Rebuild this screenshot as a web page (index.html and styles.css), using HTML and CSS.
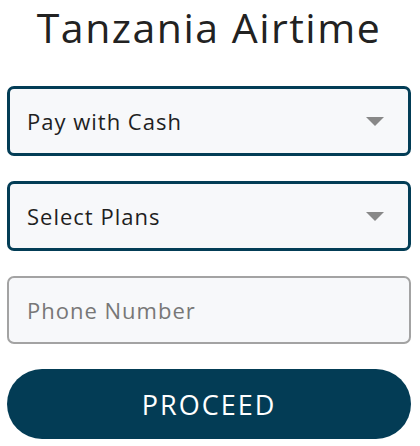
FILE: index.html
```html
<!DOCTYPE html>
<html lang="en">
<head>
  <meta charset="UTF-8">
  <title>Tanzania Airtime</title>
  <link rel="stylesheet" href="styles.css">
</head>
<body>

  <div class="form">
    <h1 class="heading">Tanzania Airtime</h1>

    <div class="select-box">
      <span class="select-label">Pay with Cash</span>
      <span class="caret"></span>
    </div>

    <div class="select-box">
      <span class="select-label">Select Plans</span>
      <span class="caret"></span>
    </div>

    <div class="text-box">
      <span class="placeholder">Phone Number</span>
    </div>

    <button class="proceed">PROCEED</button>
  </div>

</body>
</html>
```

FILE: styles.css
```css
body {
  margin: 0;
  background: #fff;
  color: #1f1f1f;
  font-family: 'Open Sans', sans-serif;
}

.form {
  padding: 0 9px 0 7px;
  display: flex;
  flex-direction: column;
  gap: 25px;
}

.heading {
  margin: 0;
  height: 61px;
  font-size: 41px;
  font-weight: 400;
  letter-spacing: 1.5px;
  text-align: center;
  line-height: 55px;
  color: #222;
}

.select-box,
.text-box {
  box-sizing: border-box;
  height: 70px;
  display: flex;
  align-items: center;
  justify-content: space-between;
  padding: 0 24px 0 17px;
  background: #f7f8fa;
  border: 3px solid #033d56;
  border-radius: 7px;
  font-size: 22px;
  letter-spacing: 1px;
}

.text-box {
  border: 2px solid #a3a3a3;
  height: 68px;
  padding-left: 18px;
}

.placeholder {
  color: #777;
}

.caret {
  width: 0;
  height: 0;
  border-left: 9px solid transparent;
  border-right: 9px solid transparent;
  border-top: 9px solid #888;
}

.proceed {
  height: 70px;
  border: none;
  border-radius: 35px;
  background: #033c55;
  color: #fff;
  font-family: inherit;
  font-size: 27px;
  letter-spacing: 2px;
  cursor: pointer;
}
```
